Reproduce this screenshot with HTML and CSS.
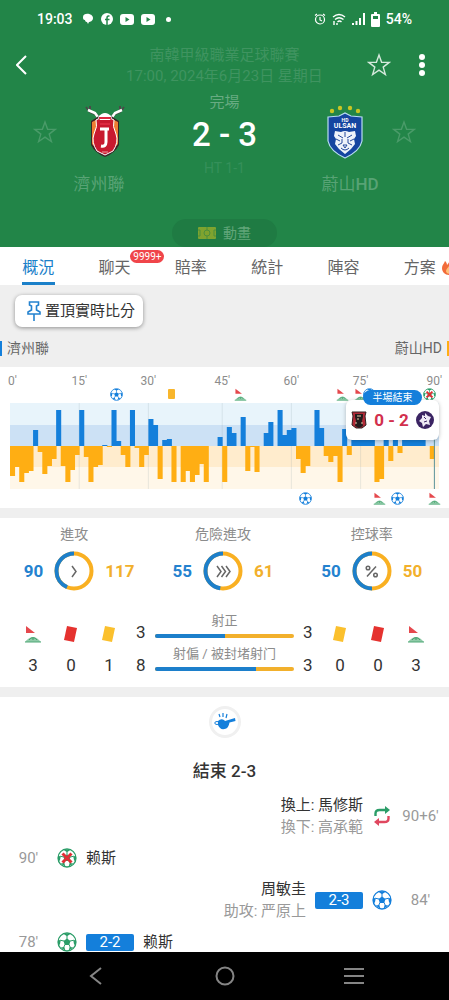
FILE: index.html
```
<!DOCTYPE html>
<html lang="zh-Hant">
  <head>
    <meta charset="UTF-8" />
    <meta name="viewport" content="width=device-width, initial-scale=1.0" />
    <title>濟州聯 2 - 3 蔚山HD</title>
    <link rel="stylesheet" href="styles.css">
  </head>
  <body>
    <!-- Shared icons -->
    <svg class="sprite" aria-hidden="true">
      <symbol id="star" viewBox="0 0 24 24">
        <path d="M12 2l2.600 7.200 7.600.2-6 4.700 2.200 7.400L12 17.200l-6.400 4.300 2.200-7.400-6-4.700 7.600-.2z" fill="none" stroke="currentColor" stroke-width="1.400" stroke-linejoin="miter" />
      </symbol>
      <symbol id="ball" viewBox="0 0 20 20">
        <circle cx="10" cy="10" r="9" fill="#fff" stroke="currentColor" stroke-width="1.300" />
        <path d="M10 6.500l3.500 2.500-1.300 4H7.800L6.500 9zM6 1.500h8L10 4.300zM1 6.800L3.600 9l-.8 4-1.800-1.500zM19 6.800L16.400 9l.8 4 1.800-1.500zM3.500 15.500l3.800-.5 1.200 3.800zM16.500 15.500l-3.800-.5-1.200 3.800z" fill="currentColor" />
        <path d="M10 7V3.500M13 9l4-.8M12 12.500l1.600 3.500M8 12.500L6.400 16M7 9l-4-.8" stroke="currentColor" stroke-width="1" />
      </symbol>
      <symbol id="ball-off" viewBox="0 0 20 20">
        <use href="#ball" />
        <path d="M5.500 5.500l9 9M14.500 5.500l-9 9" stroke="#e02f36" stroke-width="3" />
      </symbol>
      <symbol id="corner" viewBox="0 0 18 18">
        <path d="M2 1l9 7H2z" fill="#e5484d" />
        <path d="M1 17c2-2.500 5-5.500 9-5 3 .5 5 3 7 5z" fill="#8fcaa8" />
        <path d="M5 15c2-3 6-3 8 0M9 15v-2" stroke="#3fa06a" fill="none" />
        <path d="M1 17h16" stroke="#4fa877" />
      </symbol>
      <symbol id="card" viewBox="0 0 18 18">
        <path d="M5 1l10 2-3 14-10-2z" fill="currentColor" />
      </symbol>
      <symbol id="youtube" viewBox="0 0 14 11">
        <rect width="14" height="11" rx="3" fill="#fff" />
        <path d="M5.500 3l4 2.500-4 2.500z" fill="#228548" />
      </symbol>
    </svg>

    <header class="match-header">
      <div class="status-bar">
        <div class="status-group">
          <span class="clock">19:03</span>
          <svg width="12" height="12" viewBox="0 0 12 12"><path d="M1 4c0-5 10-4 10 1 0 3-3 4-4 4l-1 2-1-2C3 9 3 7 3 7 1 7 1 5 1 4z" fill="#fff" /></svg>
          <svg width="12" height="12" viewBox="0 0 12 12"><circle cx="6" cy="6" r="6" fill="#fff" /><path d="M8.500 3H7.500Q6 3 6 5v7M4 6.500h4.500" fill="none" stroke="#228548" stroke-width="1.500" /></svg>
          <svg width="14" height="11"><use href="#youtube" /></svg>
          <svg width="14" height="11"><use href="#youtube" /></svg>
          <span class="dot"></span>
        </div>
        <div class="status-group right">
          <svg width="12" height="12" viewBox="0 0 12 12" fill="none" stroke="#fff" stroke-width="1.200"><circle cx="6" cy="6.500" r="4.500" /><path d="M6 4v3l2 1M1 2.500L3 1M11 2.500L9 1" /></svg>
          <svg width="14" height="12" viewBox="0 0 14 12" fill="none" stroke="#fff" stroke-width="1.400"><path d="M1 4q6-5 12 0M3 6.500q4-3.500 8.500 0M5.500 9q2-2 4 0" /><path d="M2 8v4M5 10v2" /></svg>
          <svg width="13" height="12" viewBox="0 0 13 12" fill="#fff"><path d="M0 10h2v2H0zM3.500 8h2v4h-2zM7 5h2v7H7zM11 0h2v12h-2z" /></svg>
          <svg width="9" height="15" viewBox="0 0 9 15"><path d="M3 0h3v2h2q1 0 1 1v11q0 1-1 1H1q-1 0-1-1V3q0-1 1-1h2z" fill="#fff" /><path d="M2 4h5v3H2z" fill="#228548" /></svg>
          <span>54%</span>
        </div>
      </div>

      <div class="toolbar">
        <button class="icon-btn" aria-label="返回">
          <svg width="11" height="20" viewBox="0 0 11 20"><path d="M10 1L1 10l9 9" fill="none" stroke="#fff" stroke-width="2" /></svg>
        </button>
        <div class="match-info">
          <p>南韓甲級職業足球聯賽</p>
          <p>17:00, 2024年6月23日 星期日</p>
        </div>
        <div class="toolbar-actions">
          <button class="icon-btn" aria-label="收藏"><svg width="24" height="24"><use href="#star" /></svg></button>
          <button class="icon-btn" aria-label="更多">
            <svg width="22" height="24" viewBox="0 0 22 24" fill="#fff"><circle cx="11" cy="4" r="3" /><circle cx="11" cy="12" r="3" /><circle cx="11" cy="20" r="3" /></svg>
          </button>
        </div>
      </div>

      <div class="scoreboard">
        <div class="team home">
          <div class="team-top">
            <button class="icon-btn faded" aria-label="收藏濟州聯"><svg width="24" height="24"><use href="#star" /></svg></button>
            <svg width="40" height="54" viewBox="0 0 40 54">
              <path d="M1 2l4 5 7 3 4 7M39 2l-4 5-7 3-4 7M5 1v5M35 1v5" fill="none" stroke="#4a4a48" stroke-width="2" />
              <path d="M3 5l7 3 5 7M37 5l-7 3-5 7" fill="none" stroke="#fff" stroke-width="2.500" />
              <path d="M11 13q9-8 18 0l5 3v24q-4 8-14 12Q10 48 6 40V16z" fill="#3b2426" />
              <path d="M13 14l-6 3v22l6 6zM27 14l6 3v22l-6 6z" fill="#ef7d33" />
              <path d="M11 15q9-6 18 0-2 6 2 14 3 8-3 17l-8 4-8-4q-6-9-3-17 4-8 2-14z" fill="#c8192f" stroke="#fff" />
              <path d="M13 12q7-8 14 0l-2 3H15z" fill="#fff" />
              <path d="M14 13h12M15 19h10" stroke="#dc2940" stroke-width="2" />
              <path d="M15 24h9M21 24v13q0 5-5 4" fill="none" stroke="#fff" stroke-width="3" />
              <path d="M17 47h6" stroke="#e9a0a0" />
            </svg>
          </div>
          <p class="team-name">濟州聯</p>
        </div>

        <div class="score">
          <p class="match-state">完場</p>
          <p class="final-score">2 - 3</p>
          <p class="half-score">HT 1-1</p>
        </div>

        <div class="team away">
          <div class="team-top">
            <svg width="38" height="54" viewBox="0 0 38 54">
              <g fill="#c9c523"><circle cx="6" cy="6" r="2.200" /><circle cx="14" cy="3" r="2.200" /><circle cx="24" cy="3" r="2.200" /><circle cx="32" cy="6" r="2.200" /></g>
              <path d="M2 12l11-1 6-3 6 3 11 1v24q-2 10-17 17Q4 46 2 36z" fill="#1545a0" stroke="#b9dcf4" stroke-width="1.200" />
              <text x="19" y="17" class="crest-sub">HD</text>
              <text x="19" y="23" class="crest-text">ULSAN</text>
              <path d="M9 26l6 1q4-2 8 0l6-1 1 5-2 3 1 5-4 5-6 5-6-5-4-5 1-5-2-3z" fill="#eef3fa" />
              <path d="M12 30l5 3M26 30l-5 3M10 34l4 2M28 34l-4 2M12 40l4-2M26 40l-4-2M19 27v5M17 40h4l-2 3zM15 43q4 4 8 0M16 34v4M22 34v4" fill="none" stroke="#24499a" />
            </svg>
            <button class="icon-btn faded" aria-label="收藏蔚山HD"><svg width="24" height="24"><use href="#star" /></svg></button>
          </div>
          <p class="team-name">蔚山<span>HD</span></p>
        </div>
      </div>

      <button class="animation-btn">
        <svg width="18" height="12" viewBox="0 0 18 12"><rect width="18" height="12" rx="1" fill="#7fa32f" /><path d="M9 0v3M9 9v3M0 3h2v6H0M18 3h-2v6h2" fill="none" stroke="#4c8f3c" /><circle cx="9" cy="6" r="3" fill="none" stroke="#4c8f3c" /></svg>
        動畫
      </button>
    </header>

    <nav class="tabs">
      <a href="#overview" class="active">概況</a>
      <a href="#chat">聊天<span class="badge">9999+</span></a>
      <a href="#odds">賠率</a>
      <a href="#stats">統計</a>
      <a href="#lineup">陣容</a>
      <a href="#plan">方案
        <svg class="fire" width="18" height="18" viewBox="0 0 18 18"><path d="M9 0c1 4 6 6 6 11 0 4-3 7-7 7s-7-3-7-7c0-3 2-4 3-7 1 1 2 2 2 4 2-2 3-4 3-8z" fill="#f26b3a" /><path d="M8 9c1 2 4 3 3 6-1 3-6 2-6-1 0-2 2-3 3-5z" fill="#ffc27a" /></svg>
      </a>
    </nav>

    <main id="overview">
      <section class="pin-section">
        <button class="pin-btn">
          <svg width="14" height="20" viewBox="0 0 14 20" fill="none" stroke="#2482cf" stroke-width="1.600"><path d="M2.500 1h9v3L9.500 5v4l3.500 2v2H1v-2l3.500-2V5l-2-1zM7 13v7" /></svg>
          置頂實時比分
        </button>
        <div class="legend">
          <span class="legend-home">濟州聯</span>
          <span class="legend-away">蔚山HD</span>
        </div>
      </section>

      <!-- Momentum chart, one column per minute -->
      <section class="momentum">
        <div class="timeline labels">
          <span style="--m: 1">0'</span>
          <span style="--m: 15">15'</span>
          <span style="--m: 30">30'</span>
          <span style="--m: 46">45'</span>
          <span style="--m: 61">60'</span>
          <span style="--m: 76">75'</span>
          <span style="--m: 92">90'</span>
        </div>
        <div class="timeline">
          <svg class="blue" style="--m: 23"><use href="#ball" /></svg>
          <i class="mini-card" style="--m: 35"></i>
          <svg style="--m: 50"><use href="#corner" /></svg>
          <svg style="--m: 72"><use href="#corner" /></svg>
          <svg style="--m: 76"><use href="#corner" /></svg>
          <svg class="blue" style="--m: 78"><use href="#ball" /></svg>
          <svg class="green" style="--m: 91"><use href="#ball-off" /></svg>
        </div>
        <svg class="chart" viewBox="0 0 93 86" preserveAspectRatio="none" role="img" aria-label="進攻走勢">
          <path d="M0 0h93v22H0z" fill="#e8f4fb" />
          <path d="M0 22h93v21H0z" fill="#cce1f5" />
          <path d="M0 43h93v21H0z" fill="#ffeccd" />
          <path d="M0 64h93v22H0z" fill="#fff7e9" />
          <path d="M15 0v86M30 0v86M46 0v86M61 0v86M76 0v86" class="grid-line" />
          <path fill="#147fdb" d="M5 43v-16h1.100v16zM10 43v-36h1.100v36zM15 43v-36h1.100v36zM20 43v-1h1.100v1zM22 43v-36h1.100v36zM23 43v-5h1.100v5zM26 43v-36h1.100v36zM30 43v-27h1.100v27zM31 43v-21h1.100v21zM33 43v-6h1.100v6zM34 43v-7h1.100v7zM45 43v-9h1.100v9zM47 43v-19h1.100v19zM48 43v-13h1.100v13zM50 43v-29h1.100v29zM55 43v-13h1.100v13zM56 43v-24h1.100v24zM58 43v-36h1.100v36zM59 43v-11h1.100v11zM60 43v-16h1.100v16zM61 43v-18h1.100v18zM66 43v-36h1.100v36zM67 43v-18h1.100v18zM72 43v-17h1.100v17zM74 43v-15h5.100v15zM81 43v-12h1.100v12zM83 43v-14h1.100v14zM85 43v-12h5.100v12z" />
          <path fill="#ffae13" d="M0 43v30h1.100v-30zM1 43v21h1.100v-21zM2 43v36h1.100v-36zM3 43v27h1.100v-27zM4 43v25h1.100v-25zM6 43v6h1.100v-6zM7 43v28h1.100v-28zM8 43v20h1.100v-20zM9 43v13h1.100v-13zM11 43v20h1.100v-20zM12 43v36h1.100v-36zM13 43v24h1.100v-24zM14 43v9h1.100v-9zM16 43v11h1.100v-11zM17 43v36h1.100v-36zM18 43v21h1.100v-21zM19 43v19h1.100v-19zM21 43v1h1.100v-1zM24 43v9h1.100v-9zM25 43v21h1.100v-21zM27 43v2h1.100v-2zM28 43v21h1.100v-21zM29 43v9h1.100v-9zM32 43v33h1.100v-33zM35 43v36h1.100v-36zM37 43v36h1.100v-36zM38 43v25h1.100v-25zM39 43v36h1.100v-36zM40 43v29h1.100v-29zM41 43v18h1.100v-18zM42 43v36h1.100v-36zM46 43v36h1.100v-36zM51 43v25h1.100v-25zM52 43v1h1.100v-1zM53 43v26h1.100v-26zM62 43v13h1.100v-13zM63 43v27h1.100v-27zM64 43v20h1.100v-20zM68 43v10h1.100v-10zM69 43v16h1.100v-16zM70 43v10h1.100v-10zM71 43v36h1.100v-36zM73 43v9h1.100v-9zM79 43v36h1.100v-36zM80 43v33h1.100v-33zM82 43v15h1.100v-15zM84 43v7h1.100v-7zM91 43v13h1.100v-13z" />
          <path d="M92 0v86" class="now-line" />
        </svg>
        <div class="timeline below">
          <svg class="blue" style="--m: 64"><use href="#ball" /></svg>
          <svg style="--m: 80"><use href="#corner" /></svg>
          <svg class="blue" style="--m: 84"><use href="#ball" /></svg>
          <svg style="--m: 92"><use href="#corner" /></svg>
        </div>

        <div class="toast">
          <span class="toast-title">半場結束</span>
          <svg width="16" height="18" viewBox="0 0 16 18"><path d="M1 1h14l-1 4 1 9-4 3H5l-4-3 1-9z" fill="#b32937" stroke="#332022" /><path d="M4 3h8v3l-1 4 1 5-4 2-4-2 1-5-1-4z" fill="#221c1d" /><path d="M6 5h4M6 8h2M4 12h2M10 12h2" stroke="#e6c9a8" /></svg>
          <strong>0 - 2</strong>
          <svg width="18" height="18" viewBox="0 0 18 18"><circle cx="9" cy="9" r="9" fill="#3b2463" /><path d="M9 2l3 3 3 1-2 4 1 4-4-1-3 3-1-4-3-2 3-3V4l3 1z" fill="#eee9f5" /><path d="M8 6l2 2M8 11l3-1" stroke="#3b2463" /></svg>
        </div>
      </section>

      <section class="stats">
        <div class="rings">
          <div class="ring-stat">
            <h3>進攻</h3>
            <b class="home-num">90</b>
            <svg width="40" height="40" viewBox="0 0 40 40"><circle class="ring-away" cx="20" cy="20" r="17.500" /><circle class="ring-home" cx="20" cy="20" r="17.500" pathLength="207" stroke-dasharray="90 207" /><path class="ring-icon" d="M18 15l4 5.500-4 5.500" /></svg>
            <b class="away-num">117</b>
          </div>
          <div class="ring-stat">
            <h3>危險進攻</h3>
            <b class="home-num">55</b>
            <svg width="40" height="40" viewBox="0 0 40 40"><circle class="ring-away" cx="20" cy="20" r="17.500" /><circle class="ring-home" cx="20" cy="20" r="17.500" pathLength="116" stroke-dasharray="55 116" /><path class="ring-icon" d="M14 15l4 5.500-4 5.500M18.500 15l4 5.500-4 5.500M23 15l4 5.500-4 5.500" /></svg>
            <b class="away-num">61</b>
          </div>
          <div class="ring-stat">
            <h3>控球率</h3>
            <b class="home-num">50</b>
            <svg width="40" height="40" viewBox="0 0 40 40"><circle class="ring-away" cx="20" cy="20" r="17.500" /><circle class="ring-home" cx="20" cy="20" r="17.500" pathLength="100" stroke-dasharray="50 100" /><path class="ring-icon" d="M24 15.500l-9 10" /><circle class="ring-icon" cx="16" cy="17" r="1.800" /><circle class="ring-icon" cx="23.500" cy="24" r="1.800" /></svg>
            <b class="away-num">50</b>
          </div>
        </div>

        <div class="totals">
          <div class="count"><svg><use href="#corner" /></svg><span>3</span></div>
          <div class="count red"><svg><use href="#card" /></svg><span>0</span></div>
          <div class="count yellow"><svg><use href="#card" /></svg><span>1</span></div>
          <div class="shots">
            <span>3</span>
            <div class="shot-bar"><p>射正</p><div class="bar"><i style="width: 50%"></i></div></div>
            <span>3</span>
            <span>8</span>
            <div class="shot-bar"><p>射偏 / 被封堵射门</p><div class="bar"><i style="width: 73%"></i></div></div>
            <span>3</span>
          </div>
          <div class="count yellow"><svg><use href="#card" /></svg><span>0</span></div>
          <div class="count red"><svg><use href="#card" /></svg><span>0</span></div>
          <div class="count"><svg><use href="#corner" /></svg><span>3</span></div>
        </div>
      </section>

      <section class="feed">
        <div class="whistle">
          <svg width="22" height="18" viewBox="0 0 22 18"><path d="M4 8q3-3 6-1l1 1 10-3 .5 3-6 1.500q-1 6-5 6.500Q6 17 4 12z" fill="#147fdb" /><ellipse cx="3" cy="10" rx="2.200" ry="1.500" fill="none" stroke="#147fdb" /><path d="M6 4L5 1M9 4V0M12 5l1-4" stroke="#147fdb" stroke-width="1.200" /></svg>
        </div>
        <h2>結束 2-3</h2>
        <ul class="events">
          <li class="away-event">
            <div class="players"><p>換上: 馬修斯</p><p class="sub">換下: 高承範</p></div>
            <svg width="20" height="20" viewBox="0 0 20 20" fill="none" stroke-width="2.400"><path d="M3.500 10V7.500q0-3.500 4-3.500H14" stroke="#2b9d68" /><path d="M16.500 10v2.500q0 3.500-4 3.500H6" stroke="#e0475f" /><path d="M13 0l5 4-5 4z" fill="#2b9d68" /><path d="M7 12l-5 4 5 4z" fill="#e0475f" /></svg>
            <time>90+6'</time>
          </li>
          <li class="home-event">
            <time>90'</time>
            <svg class="green" width="20" height="20"><use href="#ball-off" /></svg>
            <p>赖斯</p>
          </li>
          <li class="away-event">
            <div class="players"><p>周敏圭</p><p class="sub">助攻: 严原上</p></div>
            <span class="goal">2-3</span>
            <svg class="blue" width="20" height="20"><use href="#ball" /></svg>
            <time>84'</time>
          </li>
          <li class="home-event">
            <time>78'</time>
            <svg class="green" width="20" height="20"><use href="#ball" /></svg>
            <span class="goal">2-2</span>
            <p>赖斯</p>
          </li>
        </ul>
      </section>
    </main>

    <footer class="system-nav">
      <button class="icon-btn" aria-label="返回"><svg width="20" height="20" viewBox="0 0 20 20"><path d="M15 2L5 10l10 8" /></svg></button>
      <button class="icon-btn" aria-label="主頁"><svg width="20" height="20" viewBox="0 0 20 20"><circle cx="10" cy="10" r="8.500" /></svg></button>
      <button class="icon-btn" aria-label="最近"><svg width="20" height="20" viewBox="0 0 20 20"><path d="M0 3h20M0 10h20M0 17h20" /></svg></button>
    </footer>
  </body>
</html>
```
FILE: styles.css
```
* {
  margin: 0;
  padding: 0;
  box-sizing: border-box;
}

body {
  display: flex;
  flex-direction: column;
  height: 100vh;
  overflow: hidden;
  background: #fff;
  color: #333;
  font-family: Roboto, "Noto Sans CJK TC", sans-serif;
  font-size: 15px;
  line-height: 22px;
}

svg {
  display: block;
  flex: none;
}

button {
  border: none;
  background: none;
  color: inherit;
  font: inherit;
}

ul {
  list-style: none;
}

.sprite {
  position: absolute;
  width: 0;
  height: 0;
}

.icon-btn {
  display: flex;
  align-items: center;
  justify-content: center;
}

.blue {
  color: #147fdb;
}

.green {
  color: #2b9d68;
}

/* Header */
.match-header {
  flex: none;
  background: #228548;
  color: #fff;
}

.status-bar {
  display: flex;
  justify-content: space-between;
  align-items: center;
  height: 38px;
  padding: 0 37px;
  font-size: 14px;
  font-weight: 500;
}

.status-group {
  display: flex;
  align-items: center;
  gap: 7px;
}

.status-group.right {
  gap: 6px;
}

.clock {
  margin-right: 2px;
}

.dot {
  width: 5px;
  height: 5px;
  margin-left: 4px;
  border-radius: 50%;
  background: #fff;
}

.toolbar {
  display: grid;
  grid-template-columns: 1fr auto 1fr;
  align-items: center;
  height: 54px;
  padding: 0 16px;
}

.toolbar > .icon-btn {
  justify-self: start;
}

.toolbar-actions {
  display: flex;
  justify-content: flex-end;
  gap: 20px;
  color: #d5e9dc;
}

.match-info {
  padding-top: 2px;
  color: #3f9460;
  line-height: 21px;
  text-align: center;
}

.scoreboard {
  display: grid;
  grid-template-columns: 1fr auto 1fr;
  align-items: start;
  padding: 0 33px;
}

.team {
  display: flex;
  flex-direction: column;
  gap: 13px;
  width: 132px;
  padding-top: 13px;
}

.away {
  justify-self: end;
}

.team-top {
  display: flex;
  align-items: center;
  gap: 28px;
}

.away .team-top {
  justify-content: flex-end;
}

.faded {
  color: #4a9b69;
}

.team-name {
  color: #58a375;
  font-size: 17px;
  line-height: 24px;
  text-align: center;
}

.team-name span {
  font-weight: 500;
}

.crest-sub,
.crest-text {
  fill: #fff;
  font-size: 7px;
  font-weight: 700;
  text-anchor: middle;
}

.crest-sub {
  font-size: 5px;
}

.score {
  text-align: center;
}

.match-state {
  color: #68ab82;
  line-height: 20px;
}

.final-score {
  font-size: 33px;
  font-weight: 500;
  line-height: 46px;
}

.half-score {
  color: #35905a;
  font-size: 14px;
  line-height: 20px;
}

.animation-btn {
  display: flex;
  align-items: center;
  justify-content: center;
  gap: 7px;
  width: 105px;
  height: 28px;
  margin: 23px auto 0;
  border-radius: 14px;
  background: #1f7b43;
  color: #62a67a;
  font-size: 14px;
}

/* Tabs */
.tabs {
  display: flex;
  flex: none;
  height: 38px;
  overflow: hidden;
  background: #fff;
  font-size: 16px;
}

.tabs a {
  position: relative;
  flex: 0 0 17%;
  color: #666;
  line-height: 41px;
  text-align: center;
  text-decoration: none;
}

.tabs .active {
  color: #1b80c9;
}

.tabs .active::after {
  content: "";
  position: absolute;
  bottom: 0;
  left: calc(50% - 16px);
  width: 33px;
  height: 3px;
  background: #1b80c9;
}

.badge {
  position: absolute;
  top: 3px;
  left: 54px;
  padding: 0 3px;
  border-radius: 7px;
  background: #f0454a;
  color: #fff;
  font-size: 10px;
  line-height: 13px;
}

.fire {
  position: absolute;
  top: 10px;
  left: 59px;
}

main {
  flex: 1;
  min-height: 0;
  overflow: hidden;
  background: #efefef;
}

/* Pinned score + legend */
.pin-section {
  padding-top: 10px;
}

.pin-btn {
  display: flex;
  align-items: center;
  gap: 4px;
  height: 32px;
  margin-left: 15px;
  padding: 0 8px 0 12px;
  border-radius: 7px;
  background: #fff;
  box-shadow: 0 1px 4px rgba(0, 0, 0, 0.4);
}

.legend {
  display: flex;
  justify-content: space-between;
  padding: 10px 0 8px;
  color: #666;
  font-size: 14px;
}

.legend-home,
.legend-away {
  display: flex;
  align-items: center;
  gap: 5px;
}

.legend-home::before,
.legend-away::after {
  content: "";
  width: 2px;
  height: 15px;
  background: #147fdb;
}

.legend-away::after {
  background: #ffae13;
}

/* Momentum chart */
.momentum {
  position: relative;
  padding: 3px 10px 1px;
  background: #fff;
}

.timeline {
  display: grid;
  grid-template-columns: repeat(93, minmax(0, 1fr));
  align-items: center;
  justify-items: center;
  height: 14px;
}

.timeline > * {
  grid-row: 1;
  grid-column: var(--m) / span 2;
}

.timeline svg {
  width: 13px;
  height: 13px;
}

.labels {
  height: 17px;
  color: #8c8c8c;
  font-size: 12px;
}

/* Kick-off label sits on the left edge of the chart */
.labels span:first-child {
  grid-column: 1 / span 1;
}

.below {
  height: 18px;
}

.mini-card {
  width: 7px;
  height: 10px;
  border-radius: 1px;
  background: #f8b62c;
}

.chart {
  width: 100%;
  height: 86px;
  margin-top: 2px;
}

.grid-line,
.now-line {
  fill: none;
  stroke: rgba(120, 140, 150, 0.16);
  stroke-width: 1px;
  vector-effect: non-scaling-stroke;
}

.now-line {
  stroke: #5b9299;
}

.toast {
  position: absolute;
  top: 33px;
  right: 10px;
  display: flex;
  align-items: center;
  justify-content: center;
  gap: 7px;
  width: 93px;
  height: 40px;
  border-radius: 6px;
  background: #fff;
  box-shadow: 0 1px 4px rgba(0, 0, 0, 0.25);
}

.toast strong {
  color: #d2304d;
  font-size: 17px;
}

.toast-title {
  position: absolute;
  top: -10px;
  left: 17px;
  width: 59px;
  border-radius: 8px;
  background: #147fdb;
  color: #fff;
  font-size: 10px;
  line-height: 15px;
  text-align: center;
}

/* Stats */
.stats {
  margin: 10px 0;
  padding: 5px 0 10px;
  background: #fff;
}

.rings {
  display: grid;
  grid-template-columns: repeat(3, 1fr);
  padding-right: 3px;
}

.ring-stat {
  display: grid;
  grid-template-columns: 1fr auto 1fr;
  align-items: center;
  gap: 6px 11px;
}

.ring-stat h3 {
  grid-column: 1 / -1;
  color: #8c8c8c;
  font-size: 14px;
  font-weight: 400;
  text-align: center;
}

.ring-stat b {
  font-size: 17px;
}

.home-num {
  color: #2482cf;
  text-align: right;
}

.away-num {
  color: #f2b02c;
}

.ring-away,
.ring-home {
  fill: none;
  stroke: #f9b022;
  stroke-width: 4px;
}

/* Home share runs anticlockwise from the top */
.ring-home {
  stroke: #1c7fcb;
  transform: rotate(-90deg) scaleY(-1);
  transform-origin: center;
}

.ring-icon {
  fill: none;
  stroke: #666;
  stroke-width: 1.5px;
}

.totals {
  display: flex;
  padding: 20px 14px 0;
  font-size: 17px;
}

.count {
  display: flex;
  flex: none;
  flex-direction: column;
  align-items: center;
  gap: 11px;
  width: 38px;
  padding: 14px 0 1px;
}

.count svg {
  width: 18px;
  height: 18px;
}

.count.red svg {
  color: #e5322f;
}

.count.yellow svg {
  color: #fbc02d;
}

.shots {
  display: grid;
  flex: 1;
  grid-template-columns: 10px 1fr 10px;
  column-gap: 9px;
  align-items: center;
  padding: 0 8px;
}

.shots > span {
  padding-top: 8px;
}

.shot-bar {
  align-self: start;
}

.shot-bar p {
  color: #8c8c8c;
  font-size: 13px;
  line-height: 20px;
  text-align: center;
  white-space: nowrap;
}

.bar {
  height: 4px;
  margin-top: 3px;
  overflow: hidden;
  border-radius: 2px;
  background: #f2b02c;
}

.bar i {
  display: block;
  height: 100%;
  background: #1c7fcb;
}

/* Event feed */
.feed {
  min-height: 100%;
  padding-top: 9px;
  background: #fff;
}

.whistle {
  display: flex;
  align-items: center;
  justify-content: center;
  width: 32px;
  height: 32px;
  margin: 0 auto;
  border: 3px solid #f0f0f0;
  border-radius: 50%;
}

.feed h2 {
  padding: 22px 0 13px;
  font-size: 17px;
  font-weight: 500;
  text-align: center;
}

.events li {
  display: flex;
  align-items: center;
  gap: 9px;
  height: 42px;
  padding: 0 9px;
}

.away-event {
  justify-content: flex-end;
}

.players {
  text-align: right;
}

.sub {
  color: #999;
}

.events time {
  width: 39px;
  color: #999;
  text-align: center;
}

.goal {
  width: 48px;
  border-radius: 2px;
  background: #147fdb;
  color: #fff;
  line-height: 17px;
  text-align: center;
}

/* Android navigation */
.system-nav {
  display: flex;
  flex: none;
  align-items: center;
  justify-content: center;
  gap: 109px;
  height: 48px;
  background: #000;
}

.system-nav svg {
  fill: none;
  stroke: #858585;
  stroke-width: 2px;
}
```
